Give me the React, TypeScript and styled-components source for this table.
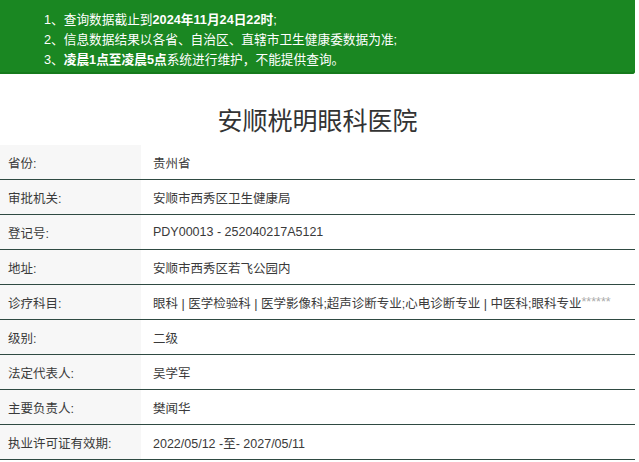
import React from "react";
import styled, { createGlobalStyle } from "styled-components";

const Global = createGlobalStyle`
  html, body { margin: 0; padding: 0; background: #fff; }
  body { font-family: "Liberation Sans", "Noto Sans CJK SC", sans-serif; color: #333; }
`;

const Page = styled.div`
  width: 635px;
  display: flex;
  flex-direction: column;
`;

const Banner = styled.div`
  background: #1a8722;
  color: #fff;
  padding: 10px 0 3px 44px;
  height: 74px;
  box-sizing: border-box;
  border-bottom-right-radius: 3px;
  box-shadow: inset 0 -2px 0 #157a1c;
`;

const BannerList = styled.ul`
  margin: 0;
  padding: 0;
  list-style: none;
  font-size: 12.7px;
  line-height: 20px;
`;

const BannerItem = styled.li`
  white-space: nowrap;
  b { font-weight: 700; }
`;

const Title = styled.h1`
  margin: 0;
  height: 71px;
  display: flex;
  align-items: center;
  justify-content: center;
  font-family: "Noto Sans", "Noto Sans CJK SC", sans-serif;
  font-weight: 400;
  font-size: 25px;
  color: #333;
  padding-top: 18px;
  box-sizing: border-box;
`;

const Table = styled.div`
  display: flex;
  flex-direction: column;
`;

const Row = styled.div`
  display: grid;
  grid-template-columns: 141px 1fr;
  height: 35px;
  border-bottom: 1px solid #2f4a42;
  box-sizing: border-box;
  font-size: 12.5px;
`;

const Label = styled.div`
  background: #f7f7f7;
  padding-left: 8px;
  display: flex;
  align-items: center;
  color: #3a3a3a;
`;

const Value = styled.div`
  padding-left: 12px;
  display: flex;
  align-items: center;
  white-space: nowrap;
  color: #3a3a3a;
`;

const Mask = styled.span`
  color: #aaa;
`;

const rows: [string, React.ReactNode][] = [
  ["省份:", "贵州省"],
  ["审批机关:", "安顺市西秀区卫生健康局"],
  ["登记号:", "PDY00013 - 252040217A5121"],
  ["地址:", "安顺市西秀区若飞公园内"],
  [
    "诊疗科目:",
    <>
      眼科 | 医学检验科 | 医学影像科;超声诊断专业;心电诊断专业 | 中医科;眼科专业<Mask>******</Mask>
    </>,
  ],
  ["级别:", "二级"],
  ["法定代表人:", "吴学军"],
  ["主要负责人:", "樊闻华"],
  ["执业许可证有效期:", "2022/05/12 -至- 2027/05/11"],
];

export default function App() {
  return (
    <Page>
      <Global />
      <Banner>
        <BannerList>
          <BannerItem>
            1、查询数据截止到<b>2024年11月24日22时</b>;
          </BannerItem>
          <BannerItem>2、信息数据结果以各省、自治区、直辖市卫生健康委数据为准;</BannerItem>
          <BannerItem>
            3、<b>凌晨1点至凌晨5点</b>系统进行维护，不能提供查询。
          </BannerItem>
        </BannerList>
      </Banner>
      <Title>安顺桄明眼科医院</Title>
      <Table>
        {rows.map(([l, v]) => (
          <Row key={l}>
            <Label>{l}</Label>
            <Value>{v}</Value>
          </Row>
        ))}
      </Table>
    </Page>
  );
}
